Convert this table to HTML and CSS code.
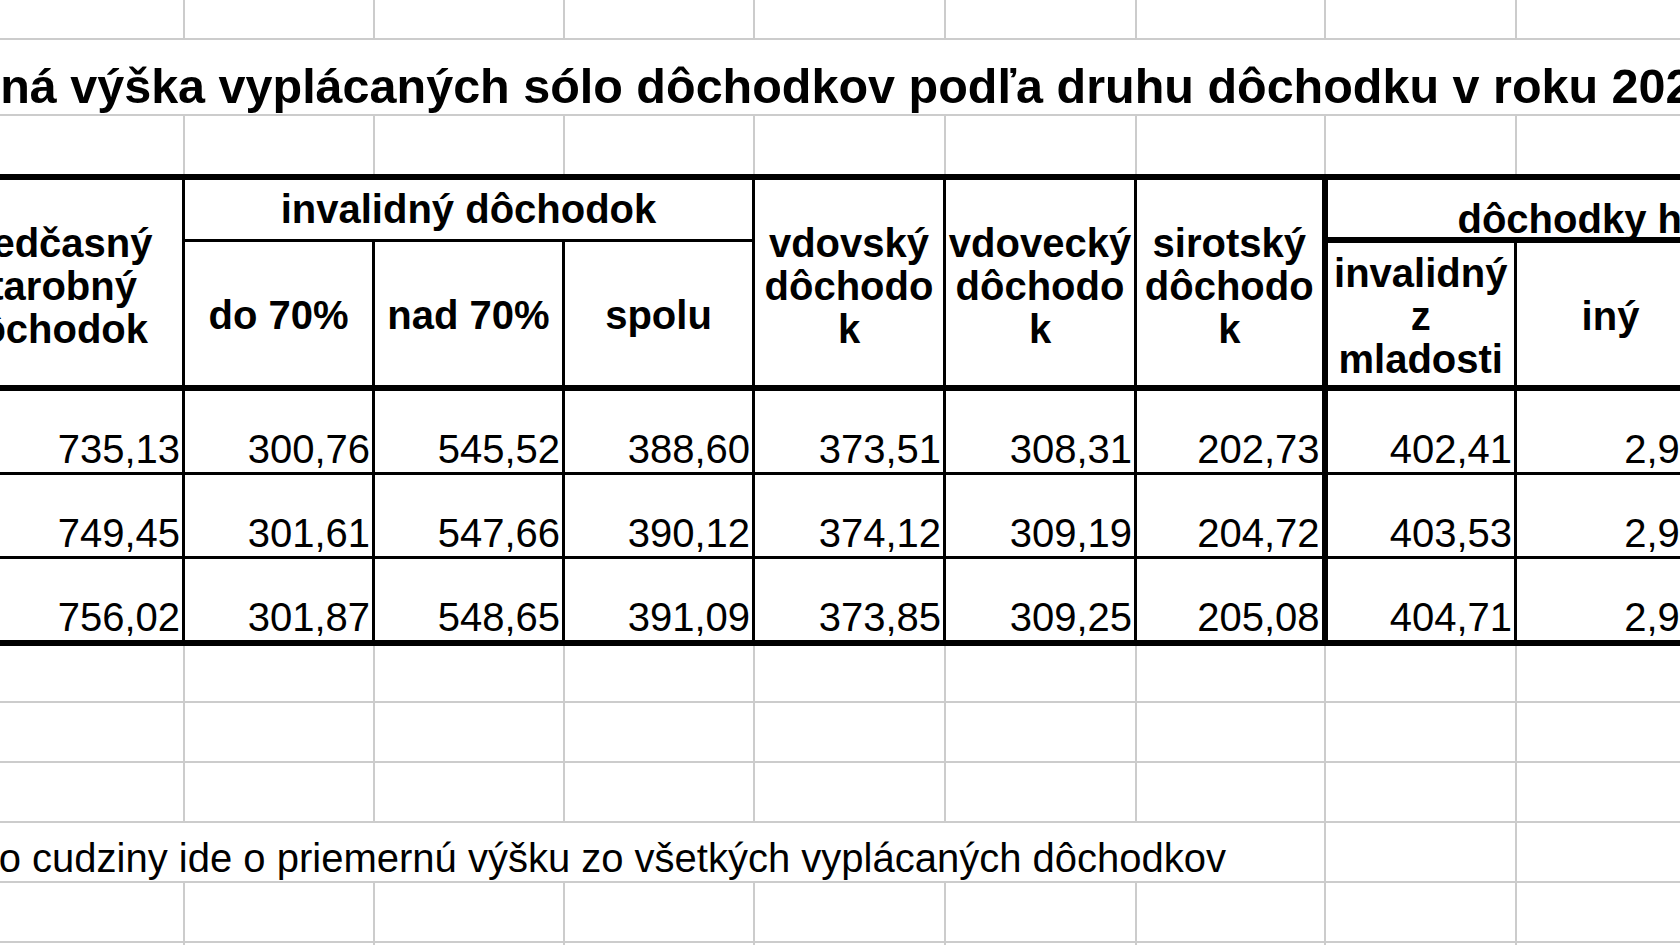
FILE: index.html
```html
<!DOCTYPE html>
<html lang="sk">
<head>
<meta charset="utf-8">
<title>Priemerná výška vyplácaných sólo dôchodkov</title>
<link rel="stylesheet" href="styles.css">
</head>
<body>
<div class="sheet">
<table class="grid">
<colgroup>
<col class="ca"><col class="cn"><col class="cn"><col class="cn"><col class="cw"><col class="cw"><col class="cs"><col class="cw"><col class="cn"><col class="cn">
</colgroup>
<tbody>
<tr class="r60"><td></td><td></td><td></td><td></td><td></td><td></td><td></td><td></td><td></td><td></td></tr>
<tr class="rtitle"><td colspan="10" class="title">Priemerná výška vyplácaných sólo dôchodkov podľa druhu dôchodku v roku 2023</td></tr>
<tr class="r62"><td></td><td></td><td></td><td></td><td></td><td></td><td></td><td></td><td></td><td></td></tr>
<tr class="rh1">
<td rowspan="2" class="th tall top bot">predčasný<br>starobný<br>dôchodok</td>
<td colspan="3" class="th top mid">invalidný dôchodok</td>
<td rowspan="2" class="th tall top bot">vdovský<br>dôchodo<br>k</td>
<td rowspan="2" class="th tall top bot">vdovecký<br>dôchodo<br>k</td>
<td rowspan="2" class="th tall top bot">sirotský<br>dôchodo<br>k</td>
<td colspan="3" class="th top grp lthick">dôchodky hradené zo ŠR</td>
</tr>
<tr class="rh2">
<td class="th sub bot">do 70%</td>
<td class="th sub bot">nad 70%</td>
<td class="th sub bot">spolu</td>
<td class="th sub bot lthick">invalidný<br>z<br>mladosti</td>
<td class="th sub bot">iný</td>
<td class="th sub bot"></td>
</tr>
<tr class="rd1">
<td class="num">735,13</td><td class="num">300,76</td><td class="num">545,52</td><td class="num">388,60</td><td class="num">373,51</td><td class="num">308,31</td><td class="num">202,73</td><td class="num lthick">402,41</td><td class="num">2,96</td><td class="num"></td>
</tr>
<tr class="rd2">
<td class="num">749,45</td><td class="num">301,61</td><td class="num">547,66</td><td class="num">390,12</td><td class="num">374,12</td><td class="num">309,19</td><td class="num">204,72</td><td class="num lthick">403,53</td><td class="num">2,97</td><td class="num"></td>
</tr>
<tr class="rd3">
<td class="num bot">756,02</td><td class="num bot">301,87</td><td class="num bot">548,65</td><td class="num bot">391,09</td><td class="num bot">373,85</td><td class="num bot">309,25</td><td class="num bot">205,08</td><td class="num bot lthick">404,71</td><td class="num bot">2,98</td><td class="num bot"></td>
</tr>
<tr class="r59"><td></td><td></td><td></td><td></td><td></td><td></td><td></td><td></td><td></td><td></td></tr>
<tr class="r60"><td></td><td></td><td></td><td></td><td></td><td></td><td></td><td></td><td></td><td></td></tr>
<tr class="r60"><td></td><td></td><td></td><td></td><td></td><td></td><td></td><td></td><td></td><td></td></tr>
<tr class="r60"><td colspan="7" class="note">do cudziny ide o priemernú výšku zo všetkých vyplácaných dôchodkov</td><td></td><td></td><td></td></tr>
<tr class="r60"><td></td><td></td><td></td><td></td><td></td><td></td><td></td><td></td><td></td><td></td></tr>
<tr class="r60"><td></td><td></td><td></td><td></td><td></td><td></td><td></td><td></td><td></td><td></td></tr>
</tbody>
</table>
</div>
</body>
</html>
```

FILE: styles.css
```css
html, body {
  margin: 0;
  padding: 0;
  background: #ffffff;
}

.sheet {
  width: 1680px;
  height: 945px;
  overflow: hidden;
  font-family: "Liberation Sans", Arial, sans-serif;
  color: #000000;
  background: #ffffff;
}

.grid {
  border-collapse: collapse;
  table-layout: fixed;
  width: 1976px;
  margin: -22px 0 0 -80px;
}

.ca { width: 262px; }
.cn { width: 190px; }
.cw { width: 191px; }
.cs { width: 189px; }

.r60 { height: 60px; }
.r59 { height: 59px; }
.r62 { height: 62px; }
.rtitle { height: 76px; }
.rh1 { height: 63px; }
.rh2 { height: 148px; }
.rd1 { height: 85px; }
.rd2 { height: 84px; }
.rd3 { height: 86px; }

.grid td {
  border: 2px solid #cccccc;
  padding: 0 2px;
  font-size: 40px;
  line-height: normal;
  white-space: nowrap;
  vertical-align: bottom;
  overflow: visible;
}

.grid td.title {
  font-size: 48.5px;
  font-weight: bold;
  padding: 0;
  text-indent: -103px;
  text-align: left;
}

.grid td.note {
  padding-left: 54px;
  text-align: left;
}

.grid td.th {
  border: 3px solid #000000;
  font-weight: bold;
  text-align: center;
  vertical-align: middle;
  line-height: 43px;
  padding: 0 1px;
}

.grid td.tall {
  padding-top: 8px;
}

.grid td.sub {
  padding-top: 4px;
}

.grid td.grp {
  text-align: left;
  vertical-align: bottom;
  padding-left: 130px;
  line-height: 36px;
}

.grid td.num {
  border: 3px solid #000000;
  text-align: right;
  padding: 0 2px 0 0;
}

.grid td.top { border-top-width: 6px; }
.grid td.bot { border-bottom-width: 6px; }
.grid td.grp { border-bottom-width: 6px; }
.grid td.lthick { border-left-width: 6px; }
```
